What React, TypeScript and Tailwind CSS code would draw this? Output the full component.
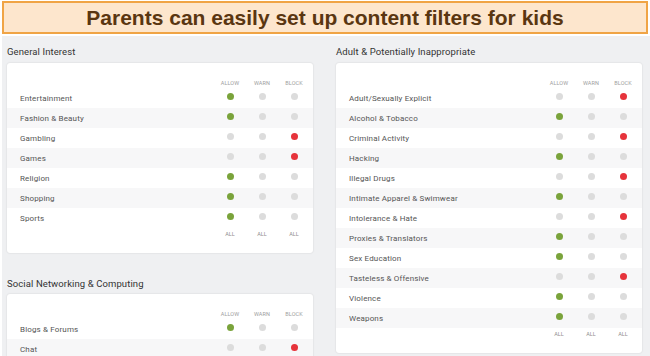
import React from "react";

type S = "A" | "W" | "B";
type Row = [string, S];

const general: Row[] = [
  ["Entertainment", "A"],
  ["Fashion & Beauty", "A"],
  ["Gambling", "B"],
  ["Games", "B"],
  ["Religion", "A"],
  ["Shopping", "A"],
  ["Sports", "A"],
];
const social: Row[] = [
  ["Blogs & Forums", "A"],
  ["Chat", "B"],
];
const adult: Row[] = [
  ["Adult/Sexually Explicit", "B"],
  ["Alcohol & Tobacco", "A"],
  ["Criminal Activity", "B"],
  ["Hacking", "A"],
  ["Illegal Drugs", "B"],
  ["Intimate Apparel & Swimwear", "A"],
  ["Intolerance & Hate", "B"],
  ["Proxies & Translators", "A"],
  ["Sex Education", "A"],
  ["Tasteless & Offensive", "B"],
  ["Violence", "A"],
  ["Weapons", "A"],
];

function Dot({ on, kind }: { on: boolean; kind: S }) {
  const cls = !on
    ? "bg-[#dcdcdc]"
    : kind === "A"
    ? "bg-[#7aa33b]"
    : kind === "B"
    ? "bg-[#e6333b]"
    : "bg-[#f0b429]";
  return (
    <div className="w-[32px] flex justify-center">
      <div className={`w-[7px] h-[7px] rounded-full mb-[4px] ${cls}`} />
    </div>
  );
}

function Card({ rows, all }: { rows: Row[]; all: boolean }) {
  return (
    <div className="bg-white rounded-[3px] shadow-[0_0_2px_rgba(0,0,0,0.14)] pt-[16px]">
      <div className="flex h-[9px] items-center pr-[3px] justify-end text-[5.5px] text-[#a0a0a0] tracking-[0.1px]">
        <div className="w-[32px] text-center">ALLOW</div>
        <div className="w-[32px] text-center">WARN</div>
        <div className="w-[32px] text-center">BLOCK</div>
      </div>
      {rows.map(([label, s], i) => (
        <div
          key={label}
          className={`flex items-center h-[20px] pr-[3px] ${i % 2 === 1 ? "bg-[#f7f7f8]" : "bg-white"}`}
        >
          <div className="flex-1 pl-[13px] pt-[2px] text-[8px] text-[#555555] tracking-[0.15px]">{label}</div>
          <Dot on={s === "A"} kind="A" />
          <Dot on={s === "W"} kind="W" />
          <Dot on={s === "B"} kind="B" />
        </div>
      ))}
      {all && (
        <div className="flex h-[12px] items-center pr-[3px] justify-end text-[5.5px] text-[#909090]">
          <div className="w-[32px] text-center">ALL</div>
          <div className="w-[32px] text-center">ALL</div>
          <div className="w-[32px] text-center">ALL</div>
        </div>
      )}
      {all && <div className="h-[13px]" />}
    </div>
  );
}

function Title({ children }: { children: React.ReactNode }) {
  return (
    <div className="h-[16px] leading-[16px] text-[9.5px] text-[#333333] tracking-[0.1px]">{children}</div>
  );
}

export default function App() {
  return (
    <div
      className="w-[650px] h-[356px] bg-white overflow-hidden flex flex-col"
      style={{ fontFamily: "Roboto, 'Liberation Sans', sans-serif" }}
    >
      <div className="mx-[2px] mt-[1px] h-[33px] border-2 border-[#f0a445] bg-[#fde6cd] flex items-center justify-center shrink-0">
        <span
          className="text-[21px] font-bold text-[#5a3611] leading-none"
          style={{ fontFamily: "'Liberation Sans', Arial, sans-serif" }}
        >
          Parents can easily set up content filters for kids
        </span>
      </div>
      <div className="mt-[2px] ml-[2px] flex-1 bg-[#eff0f2] flex pl-[5px] gap-[23px]">
        <div className="w-[306px] flex flex-col">
          <div className="pt-[8px] mb-[3px]">
            <Title>General Interest</Title>
          </div>
          <Card rows={general} all />
          <div className="mt-[23px] mb-[2px]">
            <Title>Social Networking &amp; Computing</Title>
          </div>
          <Card rows={social} all={false} />
        </div>
        <div className="w-[306px] flex flex-col">
          <div className="pt-[8px] mb-[3px]">
            <Title>Adult &amp; Potentially Inappropriate</Title>
          </div>
          <Card rows={adult} all />
        </div>
      </div>
    </div>
  );
}
